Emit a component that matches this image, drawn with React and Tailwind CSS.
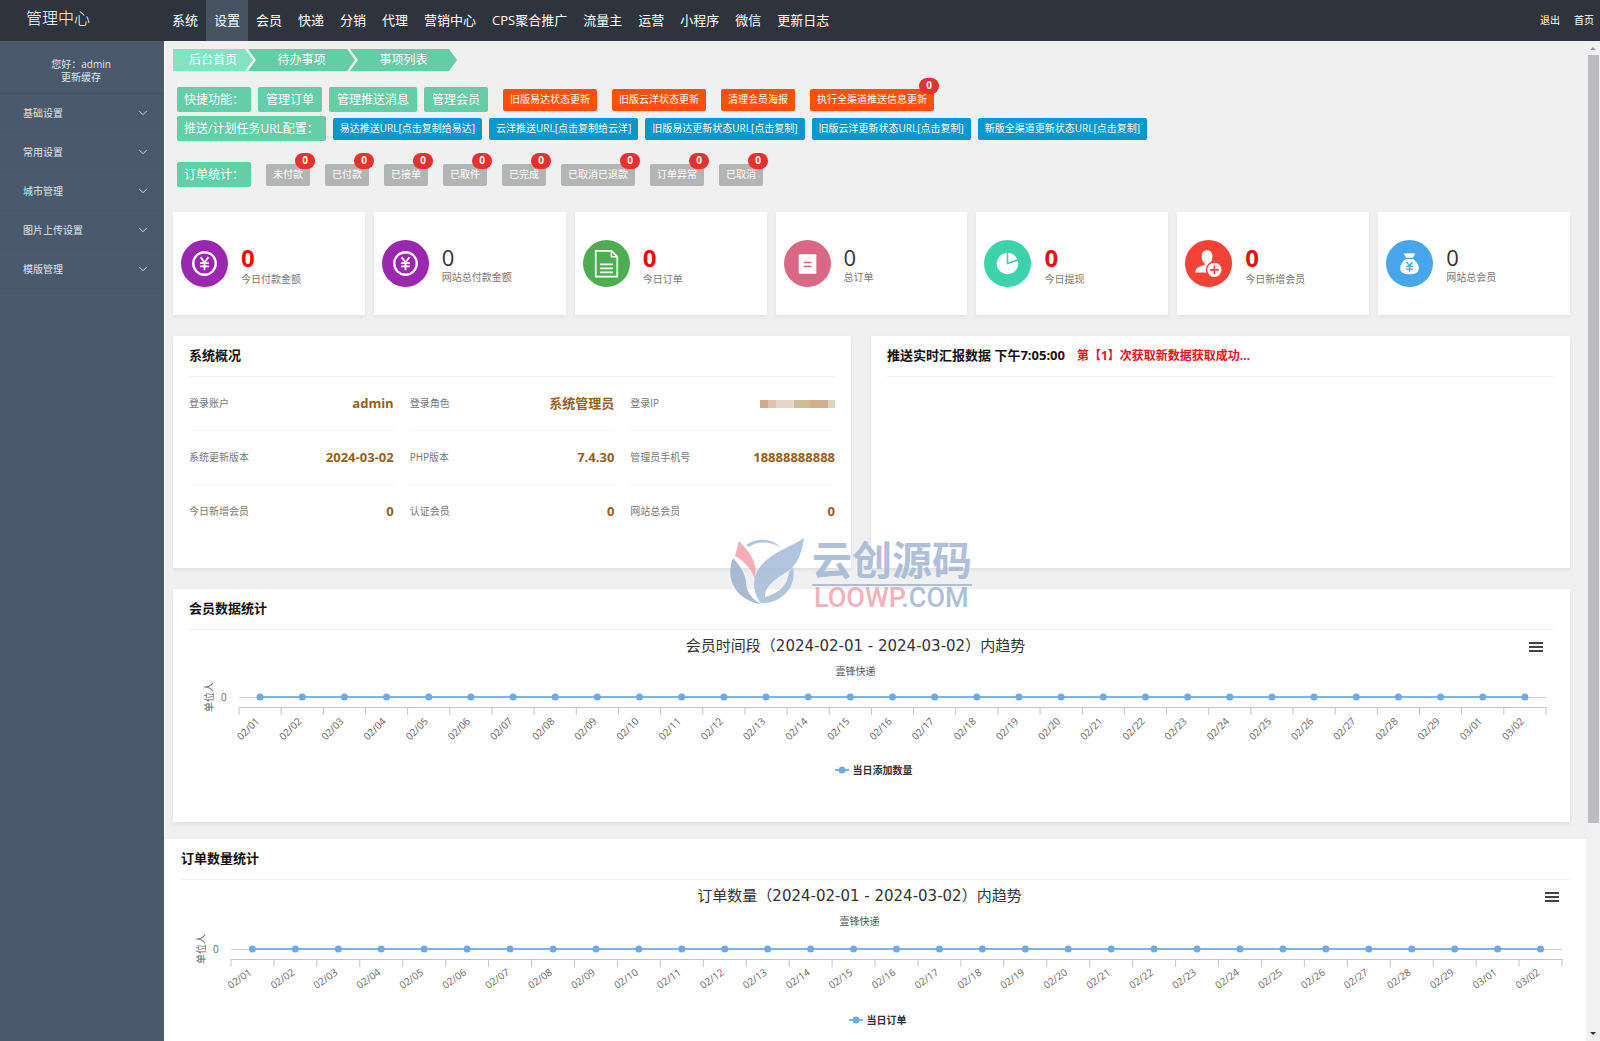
import { ChevronDown } from "lucide-react";

const NAV = [
  "系统",
  "设置",
  "会员",
  "快递",
  "分销",
  "代理",
  "营销中心",
  "CPS聚合推广",
  "流量主",
  "运营",
  "小程序",
  "微信",
  "更新日志",
];

const MENU = ["基础设置", "常用设置", "城市管理", "图片上传设置", "模版管理"];

const QUICK_LINKS = ["管理订单", "管理推送消息", "管理会员"];

const QUICK_ACTIONS = [
  { label: "旧版易达状态更新" },
  { label: "旧版云洋状态更新" },
  { label: "清理会员海报" },
  { label: "执行全渠道推送信息更新", count: 0 },
];

const URLS = [
  "易达推送URL[点击复制给易达]",
  "云洋推送URL[点击复制给云洋]",
  "旧版易达更新状态URL[点击复制]",
  "旧版云洋更新状态URL[点击复制]",
  "新版全渠道更新状态URL[点击复制]",
];

const ORDER_STATES = [
  "未付款",
  "已付款",
  "已接单",
  "已取件",
  "已完成",
  "已取消已退款",
  "订单异常",
  "已取消",
];

const SYSTEM_INFO = [
  { label: "登录账户", value: "admin" },
  { label: "登录角色", value: "系统管理员" },
  { label: "登录IP", masked: true },
  { label: "系统更新版本", value: "2024-03-02" },
  { label: "PHP版本", value: "7.4.30" },
  { label: "管理员手机号", value: "18888888888" },
  { label: "今日新增会员", value: "0" },
  { label: "认证会员", value: "0" },
  { label: "网站总会员", value: "0" },
];

// 02/01 - 02/29, then 03/01 and 03/02
const DAYS = [
  ...Array.from({ length: 29 }, (_, i) => `02/${String(i + 1).padStart(2, "0")}`),
  "03/01",
  "03/02",
];

function YenIcon() {
  return (
    <svg viewBox="0 0 48 48" className="w-full" fill="none" stroke="#fff">
      <circle cx="24" cy="24" r="11.5" strokeWidth="2.4" />
      <path d="M20 17.5l4 5.5 4-5.5M24 23v8M19.5 23.5h9M19.5 27h9" strokeWidth="1.8" />
    </svg>
  );
}

function DocIcon() {
  return (
    <svg viewBox="0 0 48 48" className="w-full" fill="none" stroke="#fff">
      <path d="M13 11h16l6 6v20.500H13z" strokeWidth="1.8" />
      <path d="M29 11v6h6" strokeWidth="1.5" />
      <path d="M17.5 25h13M17.5 29h13M17.5 33h13" strokeWidth="1.8" />
    </svg>
  );
}

function NoteIcon() {
  return (
    <svg viewBox="0 0 48 48" className="w-full">
      <rect x="15" y="14.5" width="18" height="20" rx="1" fill="#fff" />
      <path d="M20 23h8M20 27h8" stroke="#da6885" strokeWidth="1.6" />
    </svg>
  );
}

function PieIcon() {
  return (
    <svg viewBox="0 0 48 48" className="w-full">
      <circle cx="24" cy="24" r="11" fill="#fff" />
      <path d="M24 12v12l11.5-4" fill="none" stroke="#3cd2ac" strokeWidth="1.6" />
    </svg>
  );
}

function AddUserIcon() {
  return (
    <svg viewBox="0 0 48 48" className="w-full">
      <path
        d="M22.500 10.500c3.600 0 5.500 2.500 5.500 6 0 3.400-1.300 6-3 7.600v1.600l3 1.400v6H10.500c0-4.500 3.500-6 9.500-7.600v-1.400c-1.700-1.600-3-4.200-3-7.600 0-3.500 1.900-6 5.500-6z"
        fill="#fff"
      />
      <circle cx="30" cy="30.500" r="8" fill="#fff" stroke="#f44336" strokeWidth="1.4" />
      <path d="M30 26v9M25.500 30.500h9" stroke="#f44336" strokeWidth="1.6" />
    </svg>
  );
}

function MoneyBagIcon() {
  return (
    <svg viewBox="0 0 48 48" className="w-full">
      <path d="M18 13.500c2 1 3.500-.5 6 .3 2.500-.8 4 .7 6-.3l-2.500 4.500h-7z" fill="#fff" />
      <path
        d="M20.500 19.500h7c3.500 2.300 6 5.500 6 9.300 0 4-3.500 6.200-9.500 6.200s-9.500-2.200-9.500-6.200c0-3.800 2.500-7 6-9.300z"
        fill="#fff"
      />
      <path
        d="M21 22.500l3 4 3-4M24 26.500v6M20.500 27h7M20.500 29.700h7"
        fill="none"
        stroke="#48a6ea"
        strokeWidth="1.4"
      />
    </svg>
  );
}

const CARDS = [
  { label: "今日付款金额", today: true, color: "bg-[#9b26af]", Icon: YenIcon },
  { label: "网站总付款金额", color: "bg-[#9b26af]", Icon: YenIcon },
  { label: "今日订单", today: true, color: "bg-[#4cae50]", Icon: DocIcon },
  { label: "总订单", color: "bg-[#da6885]", Icon: NoteIcon },
  { label: "今日提现", today: true, color: "bg-[#3cd2ac]", Icon: PieIcon },
  { label: "今日新增会员", today: true, color: "bg-[#f44336]", Icon: AddUserIcon },
  { label: "网站总会员", color: "bg-[#48a6ea]", Icon: MoneyBagIcon },
];

function CountBadge({ children }) {
  return (
    <span className="absolute -top-[11px] -right-[5px] flex h-4 w-5 items-center justify-center rounded-full bg-[#e8302f] text-[10px] font-bold text-white">
      {children}
    </span>
  );
}

function Tag({ children }) {
  return (
    <span className="flex h-[25px] items-center rounded-xs bg-[#66cda9] px-[7px] text-xs text-white">
      {children}
    </span>
  );
}

function Panel({ title, extra, children, className = "" }) {
  return (
    <section className={`bg-white px-4 shadow-[0_2px_4px_rgba(0,0,0,0.08)] ${className}`}>
      <header className="flex h-[41px] items-center gap-3 border-b border-[#f0f0f0]">
        <h2 className="text-[13px] font-bold text-[#111]">{title}</h2>
        {extra}
      </header>
      {children}
    </section>
  );
}

function TrendChart({ title, legend, seriesY, axisY, angle }) {
  const n = DAYS.length;
  const at = (i) => `${(i * 100) / n}%`;

  return (
    <div className="relative">
      <h3 className="h-8 pr-8 text-center font-['DejaVu_Sans','Noto_Sans_CJK_SC',sans-serif] text-[15px] leading-8 text-[#333]">
        {title}
      </h3>
      <p className="h-[18px] pr-8 text-center text-[10px] leading-[18px] text-[#555]">壹锋快递</p>

      <button aria-label="图表菜单" className="absolute top-3 right-[11px] flex flex-col gap-[2px]">
        <span className="h-[2px] w-[14px] bg-[#444]" />
        <span className="h-[2px] w-[14px] bg-[#444]" />
        <span className="h-[2px] w-[14px] bg-[#444]" />
      </button>

      <div className="flex pr-2">
        <svg className="h-16 w-[50px] overflow-visible text-[10px]" fill="#666">
          <text transform={`translate(24 ${seriesY}) rotate(-90)`} textAnchor="middle">
            单位人
          </text>
          <text x="32" y={seriesY + 4}>
            0
          </text>
        </svg>
        <svg className="h-16 min-w-0 flex-1 overflow-visible text-[10px]">
          <line x1="0" x2="100%" y1={seriesY + 0.5} y2={seriesY + 0.5} stroke="#d0d0d0" />
          <line x1="0" x2="100%" y1={axisY + 0.5} y2={axisY + 0.5} stroke="#c0c4cc" />
          {[...DAYS, "end"].map((day, i) => (
            <line key={day} x1={at(i)} x2={at(i)} y1={axisY} y2={axisY + 8} stroke="#c0c4cc" />
          ))}
          <line
            x1={at(0.5)}
            x2={at(n - 0.5)}
            y1={seriesY}
            y2={seriesY}
            stroke="#7cb5ec"
            strokeWidth="2"
          />
          {DAYS.map((day, i) => (
            <svg key={day} x={at(i + 0.5)} className="overflow-visible">
              <circle cy={seriesY} r="3.5" fill="#6eaae8" />
              <text
                transform={`translate(0 ${axisY + 15}) rotate(${angle})`}
                textAnchor="end"
                fill="#666"
              >
                {day}
              </text>
            </svg>
          ))}
        </svg>
      </div>

      <div className="mt-4 flex h-5 items-center justify-center gap-1 pl-1 text-[10px] font-bold text-[#333]">
        <svg className="h-2 w-[14px]">
          <path d="M0 4h14" stroke="#7cb5ec" strokeWidth="2" />
          <circle cx="7" cy="4" r="3.5" fill="#6eaae8" />
        </svg>
        {legend}
      </div>
    </div>
  );
}

function Watermark() {
  return (
    <div className="pointer-events-none absolute top-[538px] left-[730px] flex items-start gap-2 opacity-90">
      <svg viewBox="0 0 74 66" className="h-[66px] w-[74px]">
        <path d="M16 7C27-1 43 0 51 10 41 3 27 3 19 9z" fill="#a9bfda" />
        <path d="M9 3c9 10 19 19 16 38C21 29 11 21 5 18z" fill="#f3a5b1" />
        <path
          d="M3 20C-3 34 0 54 20 63c4 2 8 3 11 3-11-6-15-14-15-23C14 32 8 26 3 20z"
          fill="#a0b4d0"
        />
        <path
          d="M74 0C60 10 34 16 26 36c-4 11-1 22 5 29 19 1 36-14 32-36l-4 5c-1 12-9 21-24 25 0-12 12-19 23-26C68 26 72 14 74 0z"
          fill="#a9bfda"
        />
      </svg>
      <div className="mt-[2px]">
        <div className="border-b-2 border-[#a9b9d2] pb-1 text-[40px] leading-10 font-bold text-[#a6bad6]">
          云创源码
        </div>
        <div className="px-[2px] font-[Roboto] text-[27px] leading-6 font-medium text-[#a9b9d2]">
          <span className="text-[#f2a9b5]">LOOWP</span>.COM
        </div>
      </div>
    </div>
  );
}

export default function App() {
  return (
    <div className="relative flex h-screen flex-col overflow-hidden bg-[#f0f0f0] font-['Open_Sans','Noto_Sans_CJK_SC',sans-serif]">
      {/* TOP BAR */}
      <header className="flex h-[41px] shrink-0 bg-[#2d343e] text-white">
        <h1 className="w-[164px] shrink-0 pl-[26px] text-base leading-9 font-light">管理中心</h1>
        <nav className="flex flex-1 text-[13px]">
          {NAV.map((item) => (
            <a
              key={item}
              href="#"
              className={`flex items-center px-2 ${item === "设置" ? "bg-[#475361]" : ""}`}
            >
              {item}
            </a>
          ))}
        </nav>
        <div className="flex items-center gap-[14px] pr-[6px] text-[10px]">
          <a href="#">退出</a>
          <a href="#">首页</a>
        </div>
      </header>

      <div className="flex min-h-0 flex-1">
        {/* SIDEBAR */}
        <aside className="w-[164px] shrink-0 bg-[#4a5a6c] text-[10px] text-[#dfe5ec]">
          <div className="border-b border-[#445364] pt-[17px] pr-[2px] pb-[9px] text-center leading-[13px]">
            <p>您好：admin</p>
            <a href="#">更新缓存</a>
          </div>
          {MENU.map((item) => (
            <button
              key={item}
              className="flex h-[39px] w-full items-center justify-between border-b border-[#475769] pr-[14px] pl-[23px]"
            >
              {item}
              <ChevronDown size={14} strokeWidth={1.5} />
            </button>
          ))}
        </aside>

        {/* CONTENT */}
        <main className="min-w-0 flex-1 overflow-hidden border-l border-white pt-2">
          <div className="pr-4 pl-2">
            <nav className="flex h-[22px] text-xs leading-[22px] text-white">
              <a
                href="#"
                className="w-20 bg-[#82e3c3] text-center [clip-path:polygon(0_0,calc(100%-8px)_0,100%_50%,calc(100%-8px)_100%,0_100%)]"
              >
                后台首页
              </a>
              <a
                href="#"
                className="-ml-[5px] w-[107px] bg-[#62cda6] text-center [clip-path:polygon(0_0,calc(100%-8px)_0,100%_50%,calc(100%-8px)_100%,0_100%,8px_50%)]"
              >
                待办事项
              </a>
              <a
                href="#"
                className="-ml-[5px] w-[107px] bg-[#62cda6] text-center [clip-path:polygon(0_0,calc(100%-8px)_0,100%_50%,calc(100%-8px)_100%,0_100%,8px_50%)]"
              >
                事项列表
              </a>
            </nav>

            <div className="mt-4 flex items-center gap-[15px] pl-1">
              <div className="flex gap-[7px]">
                <Tag>快捷功能：</Tag>
                {QUICK_LINKS.map((item) => (
                  <button
                    key={item}
                    className="h-[25px] rounded-xs bg-[#66cda9] px-2 text-xs text-white"
                  >
                    {item}
                  </button>
                ))}
              </div>
              {QUICK_ACTIONS.map(({ label, count }) => (
                <button
                  key={label}
                  className="relative h-[22px] rounded-xs bg-[#fb5005] px-[7px] text-[10px] text-white"
                >
                  {label}
                  {count !== undefined && <CountBadge>{count}</CountBadge>}
                </button>
              ))}
            </div>

            <div className="mt-1 flex items-center gap-[7px] pl-1">
              <Tag>推送/计划任务URL配置：</Tag>
              {URLS.map((item) => (
                <button
                  key={item}
                  className="h-[22px] rounded-xs bg-[#0898ce] px-[7px] text-[10px] text-white"
                >
                  {item}
                </button>
              ))}
            </div>

            <div className="mt-[21px] flex items-center gap-[15px] pl-1">
              <Tag>订单统计：</Tag>
              {ORDER_STATES.map((item) => (
                <button
                  key={item}
                  className="relative h-[22px] rounded-xs bg-[#b3b5b5] px-[7px] text-[10px] text-white"
                >
                  {item}
                  <CountBadge>0</CountBadge>
                </button>
              ))}
            </div>

            {/* STAT CARDS */}
            <div className="mt-[25px] grid grid-cols-7 gap-[9px]">
              {CARDS.map(({ label, today, color, Icon }) => (
                <div
                  key={label}
                  className="flex items-center gap-[13px] bg-white px-2 py-7 shadow-[0_2px_4px_rgba(0,0,0,0.06)]"
                >
                  <div className={`h-[47px] w-[47px] shrink-0 rounded-full ${color}`}>
                    <Icon />
                  </div>
                  <div className={today ? "pt-1" : "pt-[2px]"}>
                    {today ? (
                      <p className="text-2xl leading-[26px] font-bold text-[#e60f0f]">0</p>
                    ) : (
                      <p className="text-[22px] leading-6 text-[#333]">0</p>
                    )}
                    <p className="text-[10px] leading-4 text-[#777]">{label}</p>
                  </div>
                </div>
              ))}
            </div>

            {/* SYSTEM + PUSH */}
            <div className="mt-[21px] grid grid-cols-[678fr_699fr] gap-5">
              <Panel title="系统概况" className="pb-[29px]">
                <dl className="grid grid-cols-3 gap-x-4">
                  {SYSTEM_INFO.map(({ label, value, masked }, i) => (
                    <div
                      key={label}
                      className={`flex h-[54px] items-center justify-between border-b ${
                        i < 6 ? "border-[#f5f5f5]" : "border-transparent"
                      }`}
                    >
                      <dt className="text-[10px] text-[#777]">{label}</dt>
                      <dd className="text-[13px] font-bold text-[#955f20]">
                        {masked ? (
                          <span className="flex">
                            <span className="h-2 w-2 bg-[#cfab86]" />
                            <span className="h-2 w-2 bg-[#e0c3ab]" />
                            <span className="h-2 w-[18px] bg-[#e5d8c8]" />
                            <span className="h-2 w-4 bg-[#cfbd98]" />
                            <span className="h-2 w-[18px] bg-[#d0b08e]" />
                            <span className="h-2 w-[7px] bg-[#ddd3bd]" />
                          </span>
                        ) : (
                          value
                        )}
                      </dd>
                    </div>
                  ))}
                </dl>
              </Panel>
              <Panel
                title="推送实时汇报数据 下午7:05:00"
                extra={
                  <span className="text-xs font-bold text-[#e8151b]">
                    第【1】次获取新数据获取成功...
                  </span>
                }
              />
            </div>

            <Panel title="会员数据统计" className="mt-[21px] pb-[42px]">
              <TrendChart
                title="会员时间段（2024-02-01 - 2024-03-02）内趋势"
                legend="当日添加数量"
                seriesY={17}
                axisY={27}
                angle={-45}
              />
            </Panel>
          </div>

          <Panel title="订单数量统计" className="mt-[17px] pb-10">
            <TrendChart
              title="订单数量（2024-02-01 - 2024-03-02）内趋势"
              legend="当日订单"
              seriesY={19}
              axisY={29}
              angle={-35}
            />
          </Panel>
        </main>

        {/* SCROLLBAR */}
        <div className="flex w-[14px] shrink-0 flex-col items-center bg-[#f1f1f1]">
          <svg viewBox="0 0 14 14" className="h-[14px] w-[14px] shrink-0">
            <path d="M4 9l3-3 3 3z" fill="#999" />
          </svg>
          <div className="min-h-0 w-full flex-1 pr-px pl-[2px]">
            <div className="h-[79%] bg-[#bdbdbf]" />
          </div>
          <svg viewBox="0 0 14 14" className="h-[14px] w-[14px] shrink-0">
            <path d="M4 5l3 3 3-3z" fill="#333" />
          </svg>
        </div>
      </div>

      <Watermark />
    </div>
  );
}
